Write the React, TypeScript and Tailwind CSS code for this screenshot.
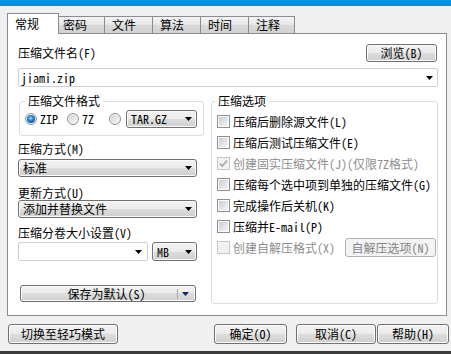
import React from "react";

const FONT = "font-['Noto_Sans_Mono_CJK_SC','Noto_Sans_CJK_SC',sans-serif]";
const BTN =
  "rounded-[3px] border border-[#707070] bg-[linear-gradient(#f2f2f2_0%,#ebebeb_50%,#dddddd_50%,#cfcfcf_100%)] shadow-[inset_0_0_0_1px_#fbfbfb]";

function Arrow({ color = "#000" }: { color?: string }) {
  return (
    <svg width="7" height="4" viewBox="0 0 7 4" className="shrink-0">
      <path d="M0 0H7L3.5 4Z" fill={color} />
    </svg>
  );
}

function DropList({ text, className = "" }: { text: string; className?: string }) {
  return (
    <div className={`flex items-center justify-between pl-[4px] pr-[4px] ${BTN} ${className}`}>
      <span className="whitespace-nowrap">{text}</span>
      <Arrow />
    </div>
  );
}

function EditCombo({ text, className = "" }: { text: string; className?: string }) {
  return (
    <div
      className={`flex items-center justify-between rounded-[2px] border border-[#cdd1d7] bg-white pl-[2px] pr-[4px] ${className}`}
    >
      <span className="whitespace-nowrap">{text}</span>
      <Arrow />
    </div>
  );
}

function Radio({ checked = false }: { checked?: boolean }) {
  return (
    <svg width="12" height="12" viewBox="0 0 12 12" className="shrink-0">
      <defs>
        <linearGradient id="rg" x1="0" y1="0" x2="1" y2="1">
          <stop offset="0" stopColor="#cfd2d6" />
          <stop offset="1" stopColor="#fafafa" />
        </linearGradient>
        <radialGradient id="rb" cx="0.45" cy="0.4" r="0.6">
          <stop offset="0" stopColor="#b9e2fb" />
          <stop offset="0.45" stopColor="#2d8ad8" />
          <stop offset="1" stopColor="#0b4f95" />
        </radialGradient>
      </defs>
      <circle cx="6" cy="6" r="5.5" fill="#f4f4f4" stroke="#8e8f8f" />
      <circle cx="6" cy="6" r="4" fill={checked ? "url(#rb)" : "url(#rg)"} />
    </svg>
  );
}

function Check({ checked = false, disabled = false }: { checked?: boolean; disabled?: boolean }) {
  return (
    <svg width="13" height="13" viewBox="0 0 13 13" className="shrink-0">
      <defs>
        <linearGradient id="cg" x1="0" y1="0" x2="1" y2="1">
          <stop offset="0" stopColor="#c9cdd3" />
          <stop offset="1" stopColor="#f6f6f6" />
        </linearGradient>
      </defs>
      <rect
        x="0.5"
        y="0.5"
        width="12"
        height="12"
        fill={disabled ? "#f4f4f4" : "#fdfdfd"}
        stroke={disabled ? "#c5c5c5" : "#8e8f8f"}
      />
      <rect x="2" y="2" width="9" height="9" fill={disabled ? "#f1f1f1" : "url(#cg)"} />
      {checked && (
        <path d="M3 6.6L5.3 9L10 3.6" fill="none" stroke="#a9a9a9" strokeWidth="1.7" />
      )}
    </svg>
  );
}

function CheckRow({
  label,
  checked = false,
  disabled = false,
  children,
}: {
  label: string;
  checked?: boolean;
  disabled?: boolean;
  children?: React.ReactNode;
}) {
  return (
    <div className="flex h-[21px] items-center">
      <Check checked={checked} disabled={disabled} />
      <span className={`ml-[3px] whitespace-nowrap ${disabled ? "text-[#8d8d8d]" : "text-black"}`}>
        {label}
      </span>
      {children}
    </div>
  );
}

export default function App() {
  const tabs = [
    { t: "密码", w: "w-[46px]", pl: "pl-[4px]" },
    { t: "文件", w: "w-[48px]", pl: "pl-[7px]" },
    { t: "算法", w: "w-[48px]", pl: "pl-[7px]" },
    { t: "时间", w: "w-[48px]", pl: "pl-[7px]" },
    { t: "注释", w: "w-[46px]", pl: "pl-[7px]" },
  ];
  return (
    <div
      className={`${FONT} flex h-[354px] w-[451px] flex-col overflow-hidden bg-[#f0f0f0] text-[12px] leading-[14px] text-black`}
    >
      <div className="h-[6px] shrink-0 bg-[#0b8ed8]" />

      {/* tabs */}
      <div className="mt-[7px] flex h-[20px] shrink-0 items-end pl-[7px]">
        <div className="relative z-10 -mb-px h-[21px] w-[52px] border border-b-0 border-[#898c95] bg-white pl-[7px] pt-[3px]">
          常规
        </div>
        {tabs.map((x) => (
          <div
            key={x.t}
            className={`h-[17px] ${x.w} ${x.pl} border-r border-t border-[#898c95] bg-[linear-gradient(#f3f3f3,#e6e6e6_50%,#d9d9d9_50%,#d2d2d2)] pt-[1px]`}
          >
            {x.t}
          </div>
        ))}
      </div>

      {/* panel */}
      <div className="ml-[7px] h-[283px] w-[440px] shrink-0 border border-[#898c95] bg-white pl-[10px] pr-[8px] pt-[10px]">
        <div className="flex h-[18px] items-center justify-between">
          <span>压缩文件名(F)</span>
          <div className={`mr-[1px] flex h-[18px] w-[71px] items-center justify-center ${BTN}`}>浏览(B)</div>
        </div>
        <EditCombo text="jiami.zip" className="mt-[6px] h-[19px] w-full" />

        <div className="mt-[8px] flex gap-[7px]">
          {/* left column */}
          <div className="flex w-[186px] flex-col">
            <fieldset className="ml-[1px] h-[41px] w-[185px] rounded-[3px] border border-[#d5dfe5]">
              <legend className="ml-[5px] px-[3px] leading-[12px]">压缩文件格式</legend>
              <div className="mt-[3px] flex h-[18px] items-center pl-[5px]">
                <div className="flex w-[42px] items-center gap-[3px]">
                  <Radio checked />
                  <span>ZIP</span>
                </div>
                <div className="flex w-[42px] items-center gap-[3px]">
                  <Radio />
                  <span>7Z</span>
                </div>
                <Radio />
                <DropList text="TAR.GZ" className="ml-[5px] h-[18px] w-[71px] pl-[3px]" />
              </div>
            </fieldset>

            <div className="mt-[6px]">压缩方式(M)</div>
            <DropList text="标准" className="mt-[3px] h-[18px] w-[179px]" />

            <div className="mt-[9px]">更新方式(U)</div>
            <DropList text="添加并替换文件" className="h-[18px] w-[179px]" />

            <div className="mt-[8px]">压缩分卷大小设置(V)</div>
            <div className="mt-[2px] flex h-[19px] items-center">
              <EditCombo text="" className="h-[19px] w-[130px] pr-[5px]" />
              <DropList text="MB" className="ml-[4px] h-[19px] w-[45px] pl-[2px]" />
            </div>

            <div className={`ml-[2px] mt-[24px] flex h-[17px] w-[176px] items-center ${BTN}`}>
              <span className="flex-1 pl-[15px] text-center">保存为默认(S)</span>
              <div className="h-[10px] w-px bg-[#a8a8a8]" />
              <div className="ml-[4px] mr-[6px]">
                <Arrow color="#0a2a66" />
              </div>
            </div>
          </div>

          {/* right column */}
          <fieldset className="h-[209px] w-[227px] rounded-[3px] border border-[#d5dfe5]">
            <legend className="ml-[3px] px-[3px] leading-[12px]">压缩选项</legend>
            <div className="mt-[4px] flex flex-col pl-[5px] pr-[1px]">
              <CheckRow label="压缩后删除源文件(L)" />
              <CheckRow label="压缩后测试压缩文件(E)" />
              <CheckRow label="创建固实压缩文件(J)(仅限7Z格式)" checked disabled />
              <CheckRow label="压缩每个选中项到单独的压缩文件(G)" />
              <CheckRow label="完成操作后关机(K)" />
              <CheckRow label="压缩并E-mail(P)" />
              <CheckRow label="创建自解压格式(X)" disabled>
                <div className="ml-auto flex h-[19px] w-[91px] items-center justify-center rounded-[3px] border border-[#adb2b5] bg-[#f4f4f4] text-[#838383]">
                  自解压选项(N)
                </div>
              </CheckRow>
            </div>
          </fieldset>
        </div>
      </div>

      {/* bottom buttons */}
      <div className="mt-[8px] flex h-[20px] shrink-0 items-center pl-[8px]">
        <div className={`flex h-[20px] w-[110px] items-center justify-center ${BTN}`}>切换至轻巧模式</div>
        <div className={`ml-[96px] flex h-[20px] w-[73px] items-center justify-center ${BTN}`}>确定(O)</div>
        <div className={`ml-[9px] flex h-[20px] w-[80px] items-center justify-center ${BTN}`}>取消(C)</div>
        <div className={`ml-[1px] flex h-[20px] w-[72px] items-center justify-center ${BTN}`}>帮助(H)</div>
      </div>

      <div className="mt-auto h-[3px] shrink-0 bg-[#3c3c3c]" />
    </div>
  );
}
